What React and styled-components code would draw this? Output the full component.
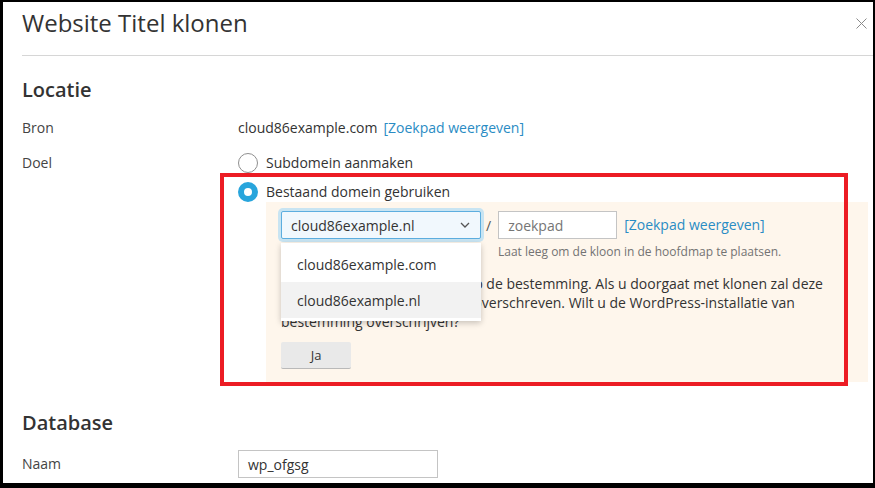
import React from "react";
import styled, { createGlobalStyle } from "styled-components";

const Global = createGlobalStyle`
  html, body { margin: 0; padding: 0; background: #000; }
  body { font-family: "Open Sans", "Noto Sans", Arial, sans-serif; color: #333; }
  * { box-sizing: border-box; }
`;

const Frame = styled.div`
  width: 875px;
  height: 488px;
  background: #000;
  padding: 2px 2px 5px 3px;
`;

const Dialog = styled.div`
  width: 100%;
  height: 100%;
  background: #fff;
  overflow: hidden;
  display: flex;
  flex-direction: column;
`;

const Header = styled.div`
  margin-left: 19px;
  height: 54px;
  border-bottom: 1px solid #d6d6d6;
  display: flex;
  justify-content: space-between;
  align-items: flex-start;
  padding-top: 5px;
  flex-shrink: 0;
`;

const Title = styled.h1`
  margin: 0;
  font-size: 24px;
  line-height: 32px;
  font-weight: 400;
  color: #333;
`;

const Close = styled.button`
  border: 0;
  background: none;
  padding: 0;
  margin: 11px 6px 0 0;
  width: 11px;
  height: 11px;
  display: flex;
  cursor: pointer;
`;

const Body = styled.div`
  padding: 22px 5px 0 19px;
`;

const SectionTitle = styled.h2`
  margin: 0 0 ${(p) => p.$gap || 16}px;
  font-size: 20px;
  line-height: 24px;
  font-weight: 600;
  color: #333;
`;

const Row = styled.div`
  display: grid;
  grid-template-columns: 216px 1fr;
  align-items: ${(p) => p.$align || "start"};
  margin-bottom: ${(p) => p.$mb || 0}px;
`;

const Label = styled.div`
  font-size: 14px;
  line-height: 20px;
  color: #444;
`;

const Value = styled.div`
  font-size: 14px;
  line-height: 20px;
  color: #333;
`;

const Link = styled.a`
  color: #2a8cc4;
  text-decoration: none;
  margin-left: ${(p) => p.$ml || 0}px;
  font-size: 14px;
  line-height: 20px;
  cursor: pointer;
`;

const Options = styled.div`
  display: flex;
  flex-direction: column;
`;

const Option = styled.label`
  display: flex;
  align-items: center;
  gap: 8px;
  height: 20px;
  font-size: 14px;
  line-height: 20px;
  color: #333;
  margin-bottom: ${(p) => p.$mb || 0}px;
`;

const Radio = styled.span`
  width: 20px;
  height: 20px;
  border-radius: 50%;
  flex-shrink: 0;
  background: #fff;
  border: ${(p) => (p.$checked ? "6px solid #28a5dc" : "1px solid #8f8f8f")};
`;

const Highlight = styled.div`
  position: relative;
  margin-top: 1px;
  &::after {
    content: "";
    position: absolute;
    left: -18px;
    top: -9px;
    right: 20px;
    bottom: -4px;
    border: 4px solid #ec1c24;
    pointer-events: none;
  }
`;

const Panel = styled.div`
  margin-left: 28px;
  background: #fef6ec;
  padding: 9px 15px 13px 15px;
`;

const PathRow = styled.div`
  display: flex;
  align-items: center;
`;

const SelectWrap = styled.div`
  position: relative;
`;

const SelectBox = styled.div`
  width: 200px;
  height: 28px;
  border: 1px solid #5daedf;
  box-shadow: 0 0 0 3px #c8e4f2;
  background: #f1f8fd;
  border-radius: 2px;
  display: flex;
  align-items: center;
  justify-content: space-between;
  padding: 0 10px 0 9px;
  font-size: 14px;
  color: #333;
`;

const Menu = styled.ul`
  position: absolute;
  left: 0;
  top: calc(100% + 4px);
  width: 200px;
  margin: 0;
  padding: 3px 0;
  list-style: none;
  background: #fff;
  box-shadow: 0 2px 6px rgba(0, 0, 0, 0.22);
  z-index: 5;
`;

const MenuItem = styled.li`
  height: 36px;
  display: flex;
  align-items: center;
  padding-left: 16px;
  font-size: 14px;
  color: #333;
  background: ${(p) => (p.$active ? "#f2f2f2" : "#fff")};
`;

const Slash = styled.span`
  font-size: 14px;
  color: #555;
  margin: 0 7px 0 5px;
`;

const InputLine = styled.div`
  display: flex;
  align-items: center;
`;

const TextInput = styled.div`
  width: ${(p) => p.$w}px;
  height: 28px;
  border: 1px solid #c4c4c4;
  background: #fff;
  display: flex;
  align-items: center;
  padding-left: 9px;
  font-size: 14px;
  color: ${(p) => (p.$placeholder ? "#757575" : "#333")};
`;

const Hint = styled.div`
  font-size: 12px;
  line-height: 16px;
  color: #737373;
  margin: 5px 0 0 217px;
`;

const Warning = styled.p`
  margin: 14px 0 0;
  font-size: 14px;
  line-height: 19px;
  color: #333;
`;

const Button = styled.button`
  margin-top: 11px;
  width: 70px;
  height: 27px;
  border: 0;
  border-bottom: 1px solid #b9b9b9;
  background: #e9e9e9;
  font-family: inherit;
  font-size: 13px;
  color: #333;
  border-radius: 2px;
`;

const Database = styled.div`
  margin-top: 29px;
`;

const Chevron = () => (
  <svg width="10" height="6" viewBox="0 0 10 6">
    <path d="M1 1l4 4 4-4" fill="none" stroke="#555" strokeWidth="1.3" />
  </svg>
);

export default function App() {
  return (
    <Frame>
      <Global />
      <Dialog>
        <Header>
          <Title>Website Titel klonen</Title>
          <Close aria-label="Sluiten">
            <svg width="11" height="11" viewBox="0 0 11 11">
              <path d="M0.5 0.5l10 10M10.5 0.5l-10 10" stroke="#8a8a8a" strokeWidth="1" />
            </svg>
          </Close>
        </Header>
        <Body>
          <SectionTitle>Locatie</SectionTitle>
          <Row $mb={15}>
            <Label>Bron</Label>
            <Value>
              cloud86example.com<Link $ml={6}>[Zoekpad weergeven]</Link>
            </Value>
          </Row>
          <Row>
            <Label>Doel</Label>
            <Options>
              <Option $mb={8}>
                <Radio />
                Subdomein aanmaken
              </Option>
              <Highlight>
                <Option>
                  <Radio $checked />
                  Bestaand domein gebruiken
                </Option>
                <Panel>
                  <PathRow>
                    <SelectWrap>
                      <SelectBox>
                        cloud86example.nl
                        <Chevron />
                      </SelectBox>
                      <Menu>
                        <MenuItem>cloud86example.com</MenuItem>
                        <MenuItem $active>cloud86example.nl</MenuItem>
                      </Menu>
                    </SelectWrap>
                    <Slash>/</Slash>
                    <InputLine>
                      <TextInput $w={119} $placeholder>zoekpad</TextInput>
                      <Link $ml={7}>[Zoekpad weergeven]</Link>
                    </InputLine>
                  </PathRow>
                  <Hint>Laat leeg om de kloon in de hoofdmap te plaatsen.</Hint>
                  <Warning>
                    Er is al WordPress aanwezig op de bestemming. Als u doorgaat met klonen zal deze
                    <br />
                    bestaande installatie worden overschreven. Wilt u de WordPress-installatie van
                    <br />
                    bestemming overschrijven?
                  </Warning>
                  <Button>Ja</Button>
                </Panel>
              </Highlight>
            </Options>
          </Row>
          <Database>
            <SectionTitle $gap={15}>Database</SectionTitle>
            <Row $align="center">
              <Label>Naam</Label>
              <TextInput $w={200}>wp_ofgsg</TextInput>
            </Row>
          </Database>
        </Body>
      </Dialog>
    </Frame>
  );
}
